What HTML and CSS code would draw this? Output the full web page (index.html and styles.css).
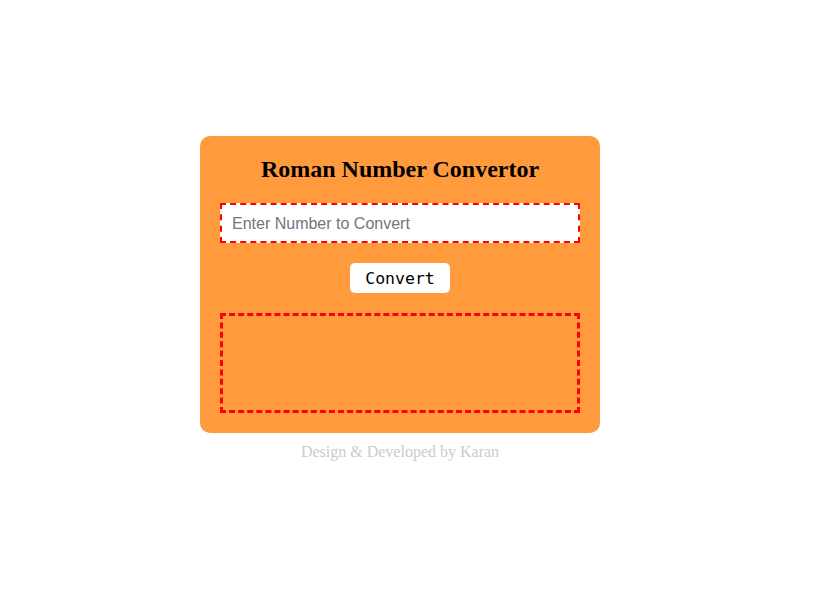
FILE: index.html
```html
<!DOCTYPE html>
<html>
<head>
<meta charset="utf-8">
<link rel="stylesheet" href="styles.css">
</head>
<body>
<div class="page">
  <div class="card">
    <h2 class="title">Roman Number Convertor</h2>
    <input class="num-input" type="text" placeholder="Enter Number to Convert">
    <button class="convert-btn">Convert</button>
    <div class="output"></div>
  </div>
  <p class="footer">Design &amp; Developed by Karan</p>
</div>
</body>
</html>
```
FILE: styles.css
```css
* { box-sizing: border-box; }
html, body { margin: 0; padding: 0; background: #fff; }
body { font-family: "Liberation Serif", "Times New Roman", serif; }
.page {
  width: 800px;
  padding-top: 136px;
  display: flex;
  flex-direction: column;
  align-items: center;
}
.card {
  width: 400px;
  background: #ff9a3d;
  border-radius: 10px;
  padding: 20px;
  display: flex;
  flex-direction: column;
  align-items: center;
  gap: 20px;
}
.title {
  margin: 0;
  font-size: 24px;
  line-height: 27px;
  font-weight: bold;
  color: #000;
  font-family: "Liberation Serif", "Times New Roman", serif;
}
.num-input {
  width: 360px;
  height: 40px;
  border: 2px dashed #ff0000;
  padding: 2px 10px 0;
  font-family: "Liberation Sans", Arial, sans-serif;
  font-size: 16px;
  outline: none;
  background: #fff;
}
.num-input::placeholder { color: #6f7780; }
.convert-btn {
  width: 100px;
  height: 30px;
  border: none;
  border-radius: 5px;
  background: #fff;
  font-family: "DejaVu Sans Mono", "Liberation Mono", monospace;
  font-size: 16.5px;
  color: #000;
  padding: 0;
}
.output {
  width: 360px;
  height: 100px;
  border: 3px dashed #ff0000;
}
.footer {
  margin: 10px 0 0;
  font-size: 16px;
  line-height: 18px;
  color: #cccccc;
}
```
